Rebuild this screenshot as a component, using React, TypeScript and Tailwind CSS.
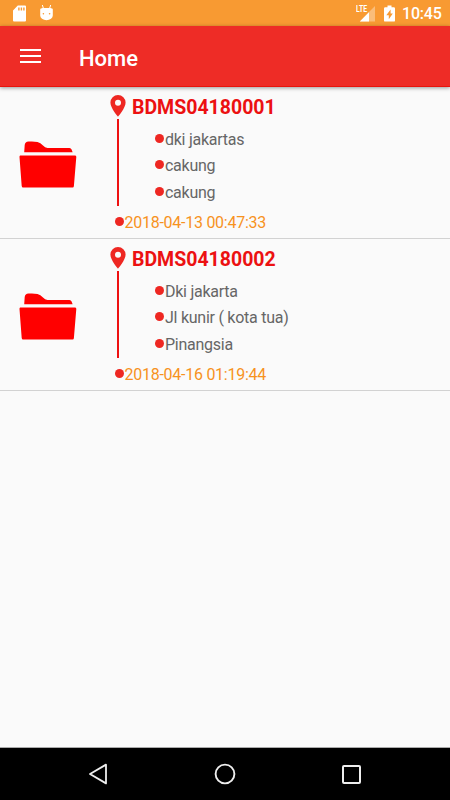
import type { ReactNode } from 'react'

type Report = {
  code: string
  places: string[]
  date: string
}

const reports: Report[] = [
  {
    code: 'BDMS04180001',
    places: ['dki jakartas', 'cakung', 'cakung'],
    date: '2018-04-13 00:47:33',
  },
  {
    code: 'BDMS04180002',
    places: ['Dki jakarta', 'Jl kunir ( kota tua)', 'Pinangsia'],
    date: '2018-04-16 01:19:44',
  },
]

const StatusBar = () => {
  return (
    <div className="flex h-[26px] shrink-0 items-center bg-[#f89a32] pr-[8px] pl-[13px] text-white">
      <svg className="h-[17px] w-[13px]" viewBox="0 0 13 17">
        <path
          fill="currentColor"
          fillRule="evenodd"
          d="M4.8.6H12a1 1 0 0 1 1 1v14a1 1 0 0 1-1 1H1a1 1 0 0 1-1-1V5.6zM5.2 2.6v3h1.4v-3zM7.7 2.6v3h1.4v-3zM10.2 2.6v3h1.4v-3z"
        />
      </svg>
      <svg className="ml-[14px] h-[17px] w-[13px]" viewBox="0 0 13 17">
        <path stroke="currentColor" strokeWidth="1" d="M2.3 0l1.2 3.6M10.7 0L9.5 3.6" />
        <path
          fill="currentColor"
          fillRule="evenodd"
          d="M.2 4.4Q.2 3.6 1 3.6Q2.2 2.6 3.4 3.1H9.6Q10.8 2.6 12 3.6Q12.8 3.6 12.8 4.4V10.6Q12.8 12.6 11 13.8Q9 15.2 6.5 15.2T2 13.8Q.2 12.6 .2 10.6zM3.4 8a.8.8 0 1 0 0 1.6a.8.8 0 1 0 0-1.6zM9.6 8a.8.8 0 1 0 0 1.6a.8.8 0 1 0 0-1.6z"
        />
      </svg>
      <div className="relative ml-auto h-[17px] w-[19px]">
        <svg className="h-full w-full" viewBox="0 0 19 17">
          <path fill="#fff" fillOpacity=".35" d="M19 1v15.6H3.8L13 7z" />
          <path fill="currentColor" d="M13 7.2v9.4H3.8z" />
        </svg>
        <span className="absolute -top-px left-0 origin-left scale-x-[0.76] text-[9px] leading-[11px] font-bold">
          LTE
        </span>
      </div>
      <svg className="ml-[9px] h-[17px] w-[11px]" viewBox="0 0 11 17">
        <path
          fill="currentColor"
          fillRule="evenodd"
          d="M3.5.5h4v1.7h2.3q1.2 0 1.2 1.2v12q0 1.2-1.2 1.2H1.2Q0 16.6 0 15.4v-12Q0 2.2 1.2 2.2h2.3zM6.6 4.5L2.3 10.3H4.8V14.3L8.8 8.5H6.6z"
        />
      </svg>
      <span className="ml-[7px] w-[40px] pt-[2px] text-[16px] leading-none font-medium tracking-[-0.2px] whitespace-nowrap">
        10:45
      </span>
    </div>
  )
}

const AppBar = () => {
  return (
    <header className="z-10 flex h-[61px] shrink-0 items-center border-b border-[#e8140c] bg-[#ee2c26] pl-5 text-white shadow-[0_1px_4px_rgba(0,0,0,0.4)]">
      <div className="flex w-[21px] flex-col gap-[4px]">
        <span className="h-[2px] bg-white" />
        <span className="h-[2px] bg-white" />
        <span className="h-[2px] bg-white" />
      </div>
      <h1 className="ml-[38px] pt-[5px] text-[22px] leading-none font-medium">Home</h1>
    </header>
  )
}

const FolderIcon = () => {
  return (
    <svg className="h-[48px] w-[58px]" viewBox="0 0 58 48" fill="#ff0000">
      <path d="M5.2 11.3L5.7 4Q6.1 1 9.5.6Q14 0 18.5 1Q21.5 1.8 24 4.6Q26 6.9 28.5 6.9H50.5Q52 6.9 52.6 8.5L53.6 11.3z" />
      <path d="M1.2 14.5H56.2Q57.4 14.5 57.3 16L54.9 45Q54.8 46.6 53.6 46.6H4Q2.9 46.6 2.7 45L.5 16Q.4 14.5 1.2 14.5z" />
    </svg>
  )
}

const PinIcon = () => {
  return (
    <svg className="h-[22px] w-[16px]" viewBox="0 0 16 22">
      <path
        fill="#ee2722"
        fillRule="evenodd"
        d="M8 0A7.6 7.6 0 0 0 .4 7.6C.4 13.3 8 21.7 8 21.7S15.6 13.3 15.6 7.6A7.6 7.6 0 0 0 8 0zM8 4.8A3 3 0 1 1 8 10.8A3 3 0 1 1 8 4.8z"
      />
    </svg>
  )
}

const Bullet = ({ children }: { children: ReactNode }) => {
  return (
    <div className="flex h-[26.6px] items-center gap-[1px] text-[16px] leading-[20px] tracking-[-0.26px] whitespace-nowrap">
      <span className="size-[9px] shrink-0 rounded-full bg-[#ee2722]" />
      <span className="pt-[3px]">{children}</span>
    </div>
  )
}

const ReportRow = ({ report }: { report: Report }) => {
  return (
    <li className="flex h-[152px] border-b border-[#d2d2d2]">
      <div className="w-[110px] pt-[54px] pl-[19px]">
        <FolderIcon />
      </div>
      <div className="flex flex-col pt-[8px]">
        <div className="flex h-[22px] items-center gap-[6px]">
          <PinIcon />
          <h2 className="pt-[3px] text-[19.5px] leading-none font-bold text-[#ec1111]">{report.code}</h2>
        </div>
        <div className="mt-[2px] flex h-[87px] pl-[7px]">
          <div className="w-[2px] bg-[#ee1111]" />
          <div className="pt-[6px] pl-[36px] text-[#666]">
            {report.places.map((place, index) => (
              <Bullet key={index}>{place}</Bullet>
            ))}
          </div>
        </div>
        <div className="mt-[2px] pl-[4.5px] text-[#f7921e]">
          <Bullet>{report.date}</Bullet>
        </div>
      </div>
    </li>
  )
}

const NavigationBar = () => {
  return (
    <nav className="flex h-[53px] shrink-0 items-center border-t border-[#aaa] bg-black pl-[89px]">
      <svg className="h-[22px] w-[18px]" viewBox="0 0 18 22" fill="none" stroke="#eee" strokeWidth="1.8">
        <path strokeLinejoin="round" d="M17 1.6v18.8L1 11z" />
      </svg>
      <svg className="ml-[107px] size-[22px]" viewBox="0 0 22 22" fill="none" stroke="#eee" strokeWidth="1.9">
        <circle cx="11" cy="11" r="9.4" />
      </svg>
      <div className="ml-[106px] size-[19px] rounded-[2px] border-2 border-[#eee]" />
    </nav>
  )
}

export default function App() {
  return (
    <div className="flex h-[800px] w-[450px] flex-col overflow-hidden bg-[#fafafa] font-[Roboto,sans-serif]">
      <StatusBar />
      <AppBar />
      <ul className="flex-1">
        {reports.map((report) => (
          <ReportRow key={report.code} report={report} />
        ))}
      </ul>
      <NavigationBar />
    </div>
  )
}
